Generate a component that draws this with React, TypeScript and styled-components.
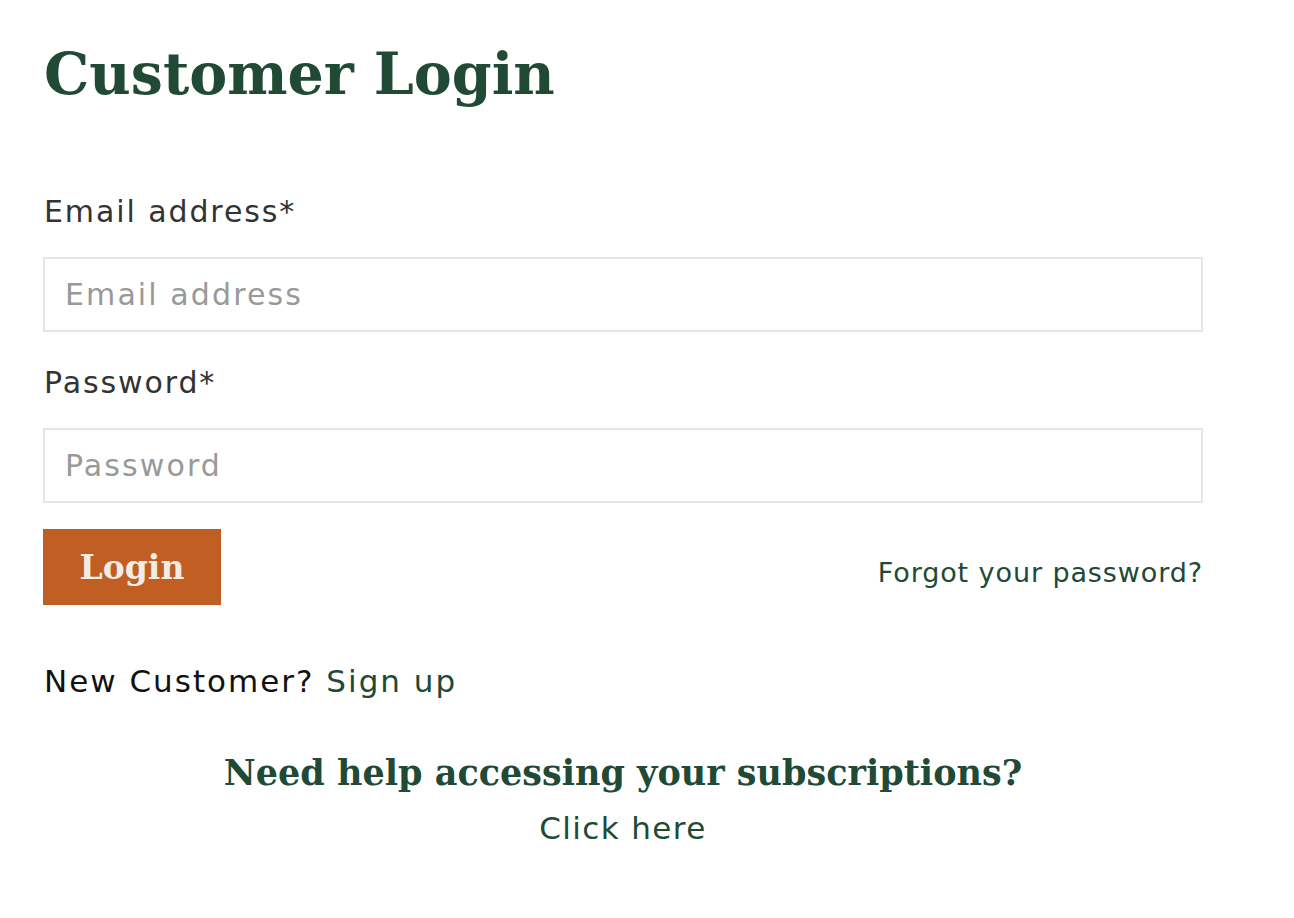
import React from 'react';
import styled, { createGlobalStyle } from 'styled-components';

const GlobalStyle = createGlobalStyle`
  html, body {
    margin: 0;
    padding: 0;
    background: #fff;
  }
  body {
    font-family: 'DejaVu Sans', 'Noto Sans', sans-serif;
    -webkit-font-smoothing: antialiased;
  }
`;

const green = '#214a36';

const Page = styled.div`
  width: 1160px;
  padding: 32px 0 0 43px;
`;

const Title = styled.h1`
  margin: 0;
  font-family: 'DejaVu Serif', 'Liberation Serif', serif;
  font-weight: 700;
  font-size: 57px;
  line-height: 84px;
  color: ${green};
  padding-left: 1px;
`;

const Form = styled.form`
  display: flex;
  flex-direction: column;
  margin-top: 79px;
`;

const Label = styled.label`
  font-size: 30px;
  line-height: 34px;
  letter-spacing: 1.9px;
  color: #333;
  padding-left: 1px;
  margin-bottom: 28px;
`;

const Input = styled.input`
  box-sizing: border-box;
  width: 100%;
  height: 75px;
  border: 2px solid #e6e6e6;
  padding: 0 20px;
  font-family: inherit;
  font-size: 30px;
  letter-spacing: 2.1px;
  color: #333;
  outline: none;
  margin-bottom: 34px;

  &::placeholder {
    color: #999;
  }
`;

const Actions = styled.div`
  display: flex;
  justify-content: space-between;
  align-items: center;
  margin-top: -8px;
`;

const LoginButton = styled.button`
  width: 178px;
  height: 76px;
  border: none;
  background: #c05e24;
  color: #f1ece6;
  font-family: 'DejaVu Serif', 'Liberation Serif', serif;
  font-weight: 700;
  font-size: 33px;
  cursor: pointer;
`;

const TextLink = styled.a<{ $size?: number; $spacing?: number }>`
  color: ${green};
  text-decoration: none;
  font-size: ${(p) => p.$size ?? 27}px;
  letter-spacing: ${(p) => p.$spacing ?? 0.9}px;
  cursor: pointer;
`;

const Forgot = styled(TextLink)`
  margin-top: 10px;
`;

const NewCustomer = styled.p`
  margin: 56px 0 0 1px;
  font-size: 31px;
  line-height: 40px;
  letter-spacing: 2px;
  color: #111;
`;

const Help = styled.div`
  display: flex;
  flex-direction: column;
  align-items: center;
  margin-top: 50px;
  gap: 15px;
`;

const HelpTitle = styled.h2`
  margin: 0;
  font-family: 'DejaVu Serif', 'Liberation Serif', serif;
  font-weight: 700;
  font-size: 35px;
  line-height: 44px;
  color: ${green};
`;

const App: React.FC = () => {
  return (
    <>
      <GlobalStyle />
      <Page>
        <Title>Customer Login</Title>
        <Form onSubmit={(e) => e.preventDefault()}>
          <Label htmlFor="email">Email address*</Label>
          <Input id="email" type="email" placeholder="Email address" />
          <Label htmlFor="password">Password*</Label>
          <Input id="password" type="password" placeholder="Password" />
          <Actions>
            <LoginButton type="submit">Login</LoginButton>
            <Forgot>Forgot your password?</Forgot>
          </Actions>
        </Form>
        <NewCustomer>
          New Customer? <TextLink $size={31} $spacing={2}>Sign up</TextLink>
        </NewCustomer>
        <Help>
          <HelpTitle>Need help accessing your subscriptions?</HelpTitle>
          <TextLink $size={31} $spacing={1.4}>Click here</TextLink>
        </Help>
      </Page>
    </>
  );
};

export default App;
